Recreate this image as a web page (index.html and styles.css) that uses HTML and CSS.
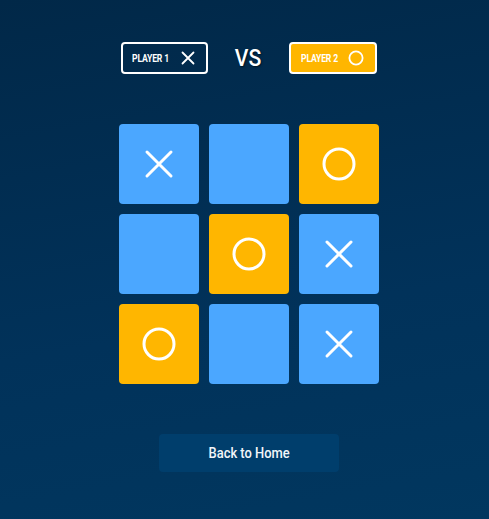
FILE: index.html
```html
<!DOCTYPE html>
<html lang="en">
<head>
<meta charset="utf-8">
<title>Tic Tac Toe</title>
<link rel="stylesheet" href="styles.css">
</head>
<body>
<main class="game">
  <header class="players">
    <div class="player player-x">
      <span class="player-name">PLAYER 1</span>
      <svg class="player-icon" viewBox="0 0 14 14" width="14" height="14"><path d="M1.5 1.5L12.5 12.5M12.5 1.5L1.5 12.5" stroke="#fff" stroke-width="1.8" stroke-linecap="round" fill="none"/></svg>
    </div>
    <span class="vs"><span class="vs-text">VS</span></span>
    <div class="player player-o">
      <span class="player-name">PLAYER 2</span>
      <svg class="player-icon" viewBox="0 0 16 16" width="16" height="16"><circle cx="8" cy="8" r="6.6" stroke="#fff" stroke-width="1.8" fill="none"/></svg>
    </div>
  </header>

  <section class="board">
    <div class="cell cell-x"><svg viewBox="0 0 30 30" width="30" height="30"><path d="M3 3L27 27M27 3L3 27" stroke="#fff" stroke-width="3" stroke-linecap="round" fill="none"/></svg></div>
    <div class="cell"></div>
    <div class="cell cell-o"><svg viewBox="0 0 36 36" width="36" height="36"><circle cx="18" cy="18" r="15" stroke="#fff" stroke-width="3" fill="none"/></svg></div>
    <div class="cell"></div>
    <div class="cell cell-o"><svg viewBox="0 0 36 36" width="36" height="36"><circle cx="18" cy="18" r="15" stroke="#fff" stroke-width="3" fill="none"/></svg></div>
    <div class="cell cell-x"><svg viewBox="0 0 30 30" width="30" height="30"><path d="M3 3L27 27M27 3L3 27" stroke="#fff" stroke-width="3" stroke-linecap="round" fill="none"/></svg></div>
    <div class="cell cell-o"><svg viewBox="0 0 36 36" width="36" height="36"><circle cx="18" cy="18" r="15" stroke="#fff" stroke-width="3" fill="none"/></svg></div>
    <div class="cell"></div>
    <div class="cell cell-x"><svg viewBox="0 0 30 30" width="30" height="30"><path d="M3 3L27 27M27 3L3 27" stroke="#fff" stroke-width="3" stroke-linecap="round" fill="none"/></svg></div>
  </section>

  <button class="home-btn" type="button"><span class="home-label">Back to Home</span></button>
</main>
</body>
</html>
```
FILE: styles.css
```css
html, body {
  margin: 0;
  padding: 0;
  height: 100%;
}

body {
  background: linear-gradient(170deg, #012848 0%, #01325a 60%, #01375f 100%);
  font-family: Roboto, "Liberation Sans", sans-serif;
  color: #fff;
  overflow: hidden;
}

.game {
  display: flex;
  flex-direction: column;
  align-items: center;
  gap: 50px;
  padding: 42px 0 0 9px;
  box-sizing: border-box;
  min-height: 519px;
}

.players {
  display: flex;
  align-items: center;
  gap: 26px;
}

.player {
  box-sizing: border-box;
  width: 87px;
  height: 32px;
  border: 2px solid #fff;
  border-radius: 4px;
  display: flex;
  align-items: center;
  justify-content: space-between;
  padding: 0 11px 0 9px;
}

.player-o {
  width: 88px;
  padding-left: 10px;
}

.player-o {
  background: #ffb600;
}

.player-name {
  font-size: 10.5px;
  font-weight: 700;
  letter-spacing: -0.2px;
  color: #fff;
  display: inline-block;
  transform: scaleX(0.82);
  transform-origin: left center;
  white-space: nowrap;
  width: 38px;
}

.player-icon {
  display: block;
  flex: none;
}

.vs {
  width: 29px;
  display: flex;
  justify-content: center;
}

.vs-text {
  display: inline-block;
  font-size: 24px;
  font-weight: 500;
  line-height: 1;
  transform: scaleX(0.88);
  text-shadow: 1px 1px 2px rgba(0, 0, 0, 0.6);
}

.board {
  display: grid;
  grid-template-columns: repeat(3, 80px);
  grid-template-rows: repeat(3, 80px);
  gap: 10px;
}

.cell {
  background: #4ba7ff;
  border-radius: 4px;
  display: flex;
  align-items: center;
  justify-content: center;
}

.cell-o {
  background: #ffb600;
}

.cell svg {
  display: block;
}

.home-btn {
  width: 180px;
  height: 38px;
  border: none;
  border-radius: 4px;
  background: #003e6c;
  color: #f2f6fa;
  font-family: Roboto, "Liberation Sans", sans-serif;
  cursor: pointer;
  display: flex;
  align-items: center;
  justify-content: center;
  padding: 0;
}

.home-label {
  display: inline-block;
  font-size: 15px;
  font-weight: 500;
  white-space: nowrap;
  transform: scaleX(0.86);
}
```
